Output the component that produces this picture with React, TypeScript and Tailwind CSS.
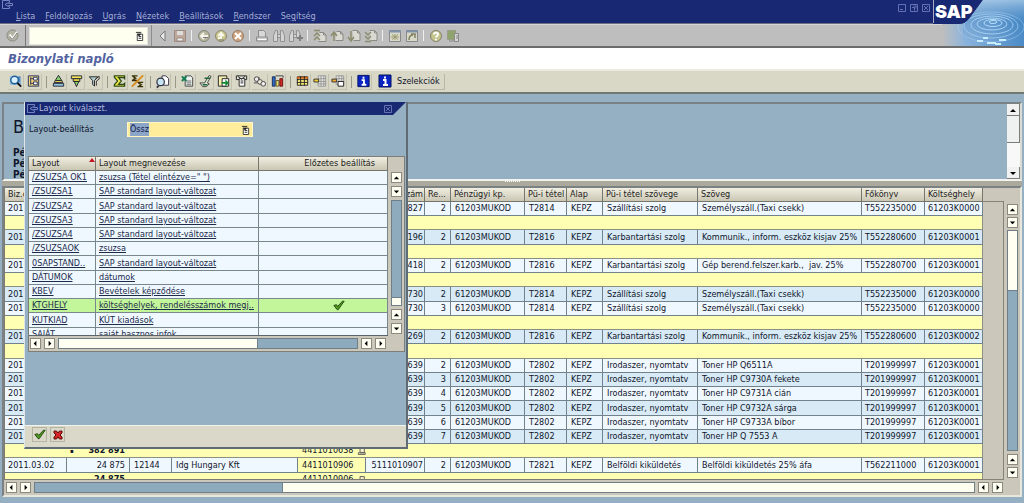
import React, { useEffect, useRef } from 'react';

const menus = [
  ['', 'L', 'ista'],
  ['', 'F', 'eldolgozás'],
  ['', 'U', 'grás'],
  ['', 'N', 'ézetek'],
  ['', 'B', 'eállítások'],
  ['', 'R', 'endszer'],
  ['Se', 'g', 'ítség'],
];

const systemTools = ['back', 'save', '|', 'navBack', 'navUp', 'navCancel', '|', 'print', 'find', 'findNext', '|', 'pageFirst', 'pagePrev', 'pageNext', 'pageLast', '|', 'session', 'shortcut', '|', 'help', 'monitor'];

const appTools = ['details', 'choose', '|', 'sortAsc', 'sortDesc', 'filter', '|', 'sum', 'subtotal', '|', 'preview', '|', 'excel', 'word', 'export', 'mail', 'abc', 'graphic', '|', 'layout', 'layoutChange', 'layoutSave', '|', 'info'];

const columns = [
  { label: 'Biz.d', width: 'w-[62px]' },
  { label: '', width: 'w-[63px]' },
  { label: '', width: 'w-[42px]' },
  { label: '', width: 'w-[126px]' },
  { label: '', width: 'w-[68px]' },
  { label: 'zám', width: 'w-[59px]' },
  { label: 'Re...', width: 'w-[26px]' },
  { label: 'Pénzügyi kp.', width: 'w-[74px]' },
  { label: 'Pü-i tétel', width: 'w-[42px]' },
  { label: 'Alap', width: 'w-[36px]' },
  { label: 'Pü-i tétel szövege', width: 'w-[95px]' },
  { label: 'Szöveg', width: '' },
  { label: 'Főkönyv', width: 'w-[63px]' },
  { label: 'Költséghely', width: 'w-[58px]' },
];

type Row = { sum?: string, mark?: string, doc?: string, cells?: string[], blue?: boolean };

const rows: Row[] = [
  { cells: ['201', '', '', '', '', '827', '2', '61203MUKOD', 'T2814', 'KEPZ', 'Szállítási szolg', 'Személyszáll.(Taxi csekk)', 'T552235000', '61203K0000'] },
  {},
  { blue: true, cells: ['201', '', '', '', '', '196', '2', '61203MUKOD', 'T2816', 'KEPZ', 'Karbantartási szolg', 'Kommunik., inform. eszköz kisjav 25%', 'T552280600', '61203K0001'] },
  {},
  { cells: ['201', '', '', '', '', '418', '2', '61203MUKOD', 'T2816', 'KEPZ', 'Karbantartási szolg', 'Gép berend.felszer.karb.,  jav. 25%', 'T552280700', '61203K0001'] },
  {},
  { blue: true, cells: ['201', '', '', '', '', '730', '2', '61203MUKOD', 'T2814', 'KEPZ', 'Szállítási szolg', 'Személyszáll.(Taxi csekk)', 'T552235000', '61203K0000'] },
  { cells: ['201', '', '', '', '', '730', '3', '61203MUKOD', 'T2814', 'KEPZ', 'Szállítási szolg', 'Személyszáll.(Taxi csekk)', 'T552235000', '61203K0000'] },
  {},
  { blue: true, cells: ['201', '', '', '', '', '269', '2', '61203MUKOD', 'T2816', 'KEPZ', 'Karbantartási szolg', 'Kommunik., inform. eszköz kisjav 25%', 'T552280600', '61203K0002'] },
  {},
  { cells: ['201', '', '', '', '', '639', '2', '61203MUKOD', 'T2802', 'KEPZ', 'Irodaszer, nyomtatv', 'Toner HP Q6511A', 'T201999997', '61203K0001'] },
  { blue: true, cells: ['201', '', '', '', '', '639', '3', '61203MUKOD', 'T2802', 'KEPZ', 'Irodaszer, nyomtatv', 'Toner HP C9730A fekete', 'T201999997', '61203K0001'] },
  { cells: ['201', '', '', '', '', '639', '4', '61203MUKOD', 'T2802', 'KEPZ', 'Irodaszer, nyomtatv', 'Toner HP C9731A cián', 'T201999997', '61203K0001'] },
  { blue: true, cells: ['201', '', '', '', '', '639', '5', '61203MUKOD', 'T2802', 'KEPZ', 'Irodaszer, nyomtatv', 'Toner HP C9732A sárga', 'T201999997', '61203K0001'] },
  { cells: ['201', '', '', '', '', '639', '6', '61203MUKOD', 'T2802', 'KEPZ', 'Irodaszer, nyomtatv', 'Toner HP C9733A bíbor', 'T201999997', '61203K0001'] },
  { blue: true, cells: ['201', '', '', '', '', '639', '7', '61203MUKOD', 'T2802', 'KEPZ', 'Irodaszer, nyomtatv', 'Toner HP Q 7553 A', 'T201999997', '61203K0001'] },
  { mark: '▪', sum: '382 891', doc: '4411010638' },
  { cells: ['2011.03.02', '24 875', '12144', 'Idg Hungary Kft', '4411010906', '5111010907', '2', '61203MUKOD', 'T2821', 'KEPZ', 'Belföldi kiküldetés', 'Belföldi kiküldetés 25% áfa', 'T562211000', '61203K0001'] },
  { sum: '24 875', doc: '4411010906' },
];

const layouts = [
  ['/ZSUZSA OK1', 'zsuzsa (Tétel elintézve=" ")'],
  ['/ZSUZSA1', 'SAP standard layout-változat'],
  ['/ZSUZSA2', 'SAP standard layout-változat'],
  ['/ZSUZSA3', 'SAP standard layout-változat'],
  ['/ZSUZSA4', 'SAP standard layout-változat'],
  ['/ZSUZSAOK', 'zsuzsa'],
  ['0SAPSTAND..', 'SAP standard layout-változat'],
  ['DÁTUMOK', 'dátumok'],
  ['KBEV', 'Bevételek képződése'],
  ['KTGHELY', 'költséghelyek, rendelésszámok megj..'],
  ['KUTKIAD', 'KÚT kiadások'],
  ['SAJÁT', 'saját hasznos infok'],
];

// grey icons of the system toolbar
const systemIcons: Record<string, React.ReactNode> = {
  back: <path d="M10 3v10L5 8z" fill="#e8e8e8" stroke="#777" />,
  save: <><path d="M2.500 2.500h11v11h-11z" fill="#c0a99c" stroke="#9a8a80" /><path d="M5 3h6v4H5z" fill="#ddd" /><path d="M5 10h6v3H5z" fill="#eee" stroke="#9a8a80" /></>,
  navBack: <><circle cx="8" cy="8" r="5.500" fill="#b5b69c" stroke="#85857a" /><path d="M12 8H5M8 5L5 8l3 3" fill="none" stroke="#f4f4ea" strokeWidth="2" /><path d="M12 9.500H7" stroke="#777" /></>,
  navUp: <><circle cx="8" cy="8" r="5.500" fill="#c9c48c" stroke="#8e8870" /><path d="M5 8l3-3 3 3M8 5v5H5" fill="none" stroke="#f8f8ea" strokeWidth="2" /><path d="M6 12h5" stroke="#777" /></>,
  navCancel: <><circle cx="8" cy="8" r="5.500" fill="#cda27e" stroke="#957c66" /><path d="M5 5l6 6M11 5l-6 6" stroke="#fff" strokeWidth="2" /></>,
  print: <><path d="M4.500 9V2.500h5l2 2V9" fill="#d8d8d8" stroke="#8c8c8c" /><path d="M2.500 9h11v4h-11z" fill="#ccc" stroke="#8c8c8c" /><path d="M4 11.500h8" stroke="#fff" /></>,
  find: <path d="M2.500 13.500v-6l2-5h2v11zM9.500 13.500v-11h2l2 5v6zM6.500 6.500h3v3h-3z" fill="#d4d4d4" stroke="#909090" />,
  findNext: <><path d="M1.500 13.500v-6l2-5h2v11zM8.500 10V2.500h2l2 5M5.500 6.500h3v3h-3z" fill="#d4d4d4" stroke="#909090" /><path d="M12 7v6M9 10h6" stroke="#808080" strokeWidth="2" /></>,
  pageFirst: <><path d="M7.500 4.500h4l2.500 2.500v6.500H6.500" fill="#dadad2" stroke="#8a8a84" /><path d="M11.500 4.500V7H14" fill="none" stroke="#8a8a84" /><path d="M2 2.500h6M2 8l3-3 3 3M2 12l3-3 3 3" fill="none" stroke="#8c8d6e" strokeWidth="1.500" /></>,
  pagePrev: <><path d="M7.500 3.500h4l2.500 2.500v6.500H6.500" fill="#dadad2" stroke="#8a8a84" /><path d="M11.500 3.500V6H14" fill="none" stroke="#8a8a84" /><path d="M2 8l3-4 3 4M5 5v8" fill="none" stroke="#8c8d6e" strokeWidth="1.500" /></>,
  pageNext: <><path d="M6.500 2.500h5L14 5v7.500H7.500" fill="#dadad2" stroke="#8a8a84" /><path d="M11.500 2.500V5H14" fill="none" stroke="#8a8a84" /><path d="M2 9l3 4 3-4M5 3v9" fill="none" stroke="#8c8d6e" strokeWidth="1.500" /></>,
  pageLast: <><path d="M6.500 2.500h5L14 5v7.500H7.500" fill="#dadad2" stroke="#8a8a84" /><path d="M11.500 2.500V5H14" fill="none" stroke="#8a8a84" /><path d="M2 4l3 3 3-3M2 8l3 3 3-3M2 13.500h6" fill="none" stroke="#8c8d6e" strokeWidth="1.500" /></>,
  session: <><path d="M2.500 2.500h11v11h-11z" fill="#d9d9c9" stroke="#888" /><path d="M2 3.500h12" stroke="#7c93ab" strokeWidth="2" /><path d="M5 6.500l6 5M11 6.500l-6 5M8 6v6M4 9h8" stroke="#9a9b70" /></>,
  shortcut: <><path d="M2.500 2.500h11v11h-11z" fill="#d9d9c9" stroke="#888" /><path d="M2 3.500h12" stroke="#7c93ab" strokeWidth="2" /><path d="M5 12c0-3 1-5 4-5M7 6h4v4" fill="none" stroke="#808060" strokeWidth="1.500" /></>,
  help: <><circle cx="8" cy="8" r="5.500" fill="#c4c48c" stroke="#808068" /><path d="M6 6.500c0-3 4.500-2 4 0-.5 1.500-2 1.500-2 3M8 11v1.500" fill="none" stroke="#fff" strokeWidth="2" /></>,
  monitor: <><path d="M2.500 2.500h8v9h-8z" fill="#8fa36c" stroke="#9c9c8a" /><path d="M9.500 5.500h4v8h-4z" fill="#d5d5d5" stroke="#888" /><path d="M4 13h5M11 8h2M11 10h2" stroke="#888" /></>,
};

// coloured icons of the list toolbar
const appIcons: Record<string, React.ReactNode> = {
  details: <><path d="M2 3h12v9H2z" fill="#8fb8dc" /><path d="M9 4h4M10 6h3M10 8h3" stroke="#2a5a90" /><circle cx="7" cy="7" r="4" fill="#d8f0ff" stroke="#1c5f96" strokeWidth="1.500" /><path d="M10 10l4 4" stroke="#111" strokeWidth="2" /></>,
  choose: <><path d="M2.500 2.500h11v11h-11z" fill="#f5cf78" stroke="#26365e" /><path d="M5 4v8M5 5.500h3M5 10.500h3" stroke="#26365e" /><path d="M8 4h4v3H8zM8 9h4v3H8z" fill="#fff" stroke="#26365e" /></>,
  sortAsc: <><path d="M8 2l3.500 5.500h-7z" fill="#8bd06a" stroke="#223" /><path d="M4.500 7.500h7l1 2h-9z" fill="#f4e85c" stroke="#223" /><path d="M2.500 10.500h11v3h-11z" fill="#90c6e2" stroke="#223" /></>,
  sortDesc: <><path d="M2.500 2.500h11v3h-11z" fill="#f4e85c" stroke="#223" /><path d="M4.500 5.500h7v3h-7z" fill="#e4d640" stroke="#223" /><path d="M5.500 8.500h5L8 14z" fill="#8bd06a" stroke="#223" /></>,
  filter: <><path d="M2.500 3.500h9l-3.500 4v6l-2-2v-4z" fill="#b5cfd0" stroke="#222" /><path d="M9 6l4-3v3l-3 2v5" fill="none" stroke="#333" /></>,
  sum: <path d="M2.500 2.500h11v3l-1-1H7l3 3.500-3 3.500h5.500l1-1v3h-11V12L6 8 2.500 4z" fill="#f5ef43" stroke="#2b4a18" strokeWidth="1.300" />,
  subtotal: <><path d="M2 2.500h6M2 7.500h6M3 3l3 2-3 2M8 9.500h6M8 14h6M9 10l3 2-3 2" fill="none" stroke="#383000" strokeWidth="1.500" /><path d="M14 2L2 14" stroke="#d88d1c" strokeWidth="2" /></>,
  preview: <><path d="M7.500 2.500h4l3 3v7h-7z" fill="#fff" stroke="#334" /><circle cx="6" cy="9" r="4" fill="#c6e3f2" stroke="#334" strokeWidth="1.300" /><path d="M4 13l-2 2" stroke="#334" strokeWidth="2" /></>,
  excel: <><path d="M5.500 2.500h6l2 2v9h-8z" fill="#e9f0ee" stroke="#444" /><path d="M2 3l5 5M7 3L2 8" stroke="#167c55" strokeWidth="2" /><path d="M7 8h5M7 10h5M7 12h5" stroke="#666" /></>,
  word: <><path d="M2 10h5l5-8 2 1-4 7 2 1-3 3H5z" fill="#d7e5d1" stroke="#444" /><path d="M7 5h6M5 12h5" stroke="#20663d" strokeWidth="1.500" /></>,
  export: <><path d="M2.500 2.500h9v11h-9z" fill="#f4efae" stroke="#222" /><path d="M6.500 5.500h7v8h-7z" fill="#fff" stroke="#222" /><path d="M6 9h4V6.500l4 3.500-4 3.500V11H6z" fill="#168a36" /></>,
  mail: <><path d="M2.500 2.500h11v4h-11z" fill="#e5e5dd" stroke="#222" /><path d="M5.500 5.500h6v8h-6z" fill="#fff" stroke="#222" /><path d="M7 8h3M7 10h3M4 3l4 3 4-3" fill="none" stroke="#222" /></>,
  abc: <><circle cx="5" cy="6" r="2.500" fill="#eee" stroke="#444" /><path d="M7.500 4v7M2 10h4" stroke="#444" /><circle cx="8.500" cy="9" r="2.500" fill="#f6f3df" stroke="#444" /><circle cx="12" cy="11" r="2.500" fill="#eee" stroke="#444" /></>,
  graphic: <><path d="M2.500 3.500h3v10h-3z" fill="#2f6cc5" stroke="#1c2b55" /><path d="M6.500 7.500h3v6h-3z" fill="#f0dc58" stroke="#554" /><path d="M10.500 5.500h3v8h-3z" fill="#d32a24" stroke="#611" /><path d="M6 2.500h8v2" fill="none" stroke="#444" /></>,
  layout: <><path d="M2.500 3.500h11v9h-11z" fill="#fff27a" stroke="#222" /><path d="M2 4.500h12" stroke="#c85d1c" strokeWidth="2" /><path d="M6 3v10M10 3v10M2 6.500h12M2 9.500h12" stroke="#222" /></>,
  layoutChange: <><path d="M5.500 2.500h8v11h-8zM8.500 2v12M11.500 2v12M5 5.500h9M5 8.500h9M5 11h9" fill="#e6e6e0" stroke="#999" /><path d="M1 6h5v3H1z" fill="#f5cf2c" stroke="#333" /></>,
  layoutSave: <><path d="M5.500 2.500h8v9h-8zM8.500 2v10M11.500 2v10M5 5.500h9M5 8.500h9" fill="#e6e6e0" stroke="#999" /><path d="M1 6h5v3H1z" fill="#f5a52c" stroke="#333" /><path d="M7.500 8.500h6v5h-6z" fill="#fff" stroke="#222" /></>,
  info: <><path d="M2 2h12v12H2z" fill="#0a24c4" stroke="#001060" /><path d="M6 7h2.500v5M6 12h5M7 4.500h2" fill="none" stroke="#fff" strokeWidth="2" /></>,
};

function Icon({ children }: { children: React.ReactNode }) {
  return <svg viewBox="0 0 16 16" className="w-4 h-4 block" aria-hidden="true">{children}</svg>;
}

function MatchIcon() {
  return (
    <svg viewBox="0 0 10 11" className="w-[9px] h-[10px] block" aria-hidden="true">
      <path d="M2.500 3.500h6v7h-6z" fill="#fff" stroke="#333" />
      <path d="M1 1.500h6M4 6h3M4 8h3" stroke="#222" />
      <path d="M2 3h5L4.500 6z" fill="#222" />
    </svg>
  );
}

function Check() {
  return (
    <svg viewBox="0 0 14 12" className="w-3 h-[11px] block" aria-hidden="true">
      <path d="M1 6l3-1 1.500 2L11 1h2L6 11H5z" fill="#4f9a1e" stroke="#1c3d0a" />
    </svg>
  );
}

function Exit({ className }: { className: string }) {
  return (
    <svg viewBox="0 0 12 9" className={className} aria-hidden="true">
      <path d="M8.500 2.500v-2h-7v8h7v-2M11.500 3.500h-4v-1L4 4.500 7.500 6.500v-1h4z" fill="none" stroke="#7585c2" />
    </svg>
  );
}

const arrows: Record<string, string> = {
  up: 'M2 7h6L5 4z',
  down: 'M2 4h6L5 7z',
  left: 'M3 5l3-3v6z',
  right: 'M7 5L4 2v6z',
};

function Arrow({ dir }: { dir: string }) {
  return (
    <button type="button" aria-label={dir} className="w-[11px] h-[11px] shrink-0 bg-[#fffff2] border border-[#8c8a80]">
      <svg viewBox="0 0 10 10" className="w-full h-full block"><path d={arrows[dir]} /></svg>
    </button>
  );
}

function WindowButton({ d, label }: { d: string, label: string }) {
  return (
    <button type="button" aria-label={label} className="w-2 h-2">
      <svg viewBox="0 0 8 8" className="w-full h-full block">
        <path d={'M.5.5h7v7h-7z' + d} fill="none" stroke="#6372b4" />
      </svg>
    </button>
  );
}

function SapLogo() {
  return (
    <div className="absolute top-0 right-0 w-[91px] h-[46px] overflow-hidden">
      <svg viewBox="0 0 91 46" className="w-full h-full block" aria-hidden="true">
        <defs>
          <linearGradient id="water" x1="0" y1="0" x2="1" y2="0">
            <stop offset="0.100" stopColor="#bebebe" />
            <stop offset="0.350" stopColor="#8db4dc" />
            <stop offset="1" stopColor="#4a8ac6" />
          </linearGradient>
          <linearGradient id="shine" x1="0" y1="0" x2="0" y2="1">
            <stop offset="0" stopColor="#b5d3ec" stopOpacity="0.700" />
            <stop offset="0.500" stopColor="#3c7fbf" stopOpacity="0.300" />
            <stop offset="1" stopColor="#5e9ad2" stopOpacity="0" />
          </linearGradient>
          <clipPath id="pool"><path d="M50 0h41v46H9V24h18q5 0 9-5z" /></clipPath>
        </defs>
        <path d="M0 0h52L36 19q-4 5-9 5H0z" fill="#182872" />
        <path d="M.5 0v23" stroke="#a7acc0" />
        <g clipPath="url(#pool)">
          <path d="M0 0h91v46H0z" fill="url(#water)" />
          <path d="M30 0h61v46H30z" fill="url(#shine)" />
          <g fill="none" stroke="#b4dcf8">
            <ellipse cx="60" cy="22" rx="4" ry="1.500" />
            <ellipse cx="60" cy="23" rx="9" ry="3.500" />
            <ellipse cx="59" cy="24" rx="15" ry="6" strokeOpacity="0.850" />
            <ellipse cx="59" cy="25" rx="21" ry="9" strokeOpacity="0.750" />
            <ellipse cx="58" cy="26" rx="27" ry="12" strokeOpacity="0.600" />
            <ellipse cx="58" cy="27" rx="33" ry="15" strokeOpacity="0.400" />
          </g>
          <path d="M44 41h6M54 43h9M66 40h7M50 38h5M62 44h6" stroke="#c9ecff" strokeWidth="2" />
        </g>
      </svg>
      <span className="absolute left-[2px] top-0 font-['Inter','Liberation_Sans',sans-serif] font-black text-[18px] leading-[23px] text-white">SAP</span>
    </div>
  );
}

function DocIcon() {
  return (
    <svg viewBox="0 0 11 11" className="w-[10px] h-[10px] block" aria-hidden="true">
      <path d="M3.500 1.500h5v6h-5zM1.500 7.500h8v2h-8z" fill="#f3eecb" stroke="#55544a" />
    </svg>
  );
}

function cellClass(i: number) {
  if (i === 5) return 'text-right pr-[1px]';
  if (i === 1 || i === 6) return 'text-right pr-1';
  if (i === 0 || i > 11) return 'pl-[3px]';
  return 'pl-1';
}

function rowHeight(i: number) {
  return i % 4 === 2 ? 'h-[15px]' : 'h-[14px]';
}

function ListRow({ row, index }: { row: Row, index: number }) {
  if (!row.cells) {
    return (
      <tr className={'bg-[#ffffb3] ' + rowHeight(index)}>
        <td className="border-b border-[#8b9085]" />
        <td className="border-b border-[#8b9085] pl-[3px] pr-[5px] font-bold">
          <span className="flex justify-between">
            <span className="text-[6px]">{row.mark}</span>
            <span>{row.sum}</span>
          </span>
        </td>
        <td colSpan={2} className="border-b border-[#8b9085]" />
        <td className="border-b border-[#8b9085] pl-1">
          {row.doc && <span className="flex items-center gap-[3px]">{row.doc}<DocIcon /></span>}
        </td>
        <td colSpan={9} className="border-b border-r border-[#8b9085]" />
      </tr>
    );
  }
  return (
    <tr className={(row.blue ? 'bg-[#d7eaf5] ' : 'bg-[#f0f8ff] ') + rowHeight(index)}>
      {row.cells.map((cell, i) => (
        <td key={i} className={'border-b border-r border-[#71828c] overflow-hidden whitespace-pre ' + cellClass(i) + (i === 4 ? ' bg-[#ffffb3]' : '')}>{cell}</td>
      ))}
    </tr>
  );
}

function LayoutDialog() {
  const field = useRef<HTMLInputElement>(null);

  useEffect(() => {
    field.current?.focus();
    field.current?.select();
  }, []);

  return (
    <div role="dialog" aria-label="Layout kiválaszt." className="absolute left-6 top-[102px] w-[384px] h-[347px] flex flex-col bg-[#94b0c2] border-l border-l-[#dfe6ea] border-r-2 border-b-2 border-[#5f6c76]">
      <div className="h-[13px] shrink-0 flex items-center bg-[#182872] text-[#b3bbdd] text-[9px] leading-[13px] [clip-path:polygon(0_0,100%_0,calc(100%-13px)_100%,0_100%)]">
        <Exit className="w-3 h-[9px] ml-[1px]" />
        <span className="ml-[1px] flex-1">Layout kiválaszt.</span>
        <span className="flex mr-[14px]"><WindowButton label="Bezárás" d="M2 2l4 4M6 2L2 6" /></span>
      </div>
      <div className="flex items-center h-[15px] mt-[7px] shrink-0">
        <label htmlFor="layout" className="w-[102px] pl-1">Layout-beállítás</label>
        <div className="w-[126px] h-[15px] flex items-center bg-[#ffed9c] border border-[#fff6c8] pr-[2px]">
          <input ref={field} id="layout" defaultValue="Össz" className="flex-1 min-w-0 pl-[2px] bg-transparent outline-none leading-[13px] selection:bg-[#8aa5c8] selection:text-[#18204a]" />
          <button type="button" aria-label="Lista"><MatchIcon /></button>
        </div>
      </div>
      <div className="mt-[19px] ml-[3px] mr-[1px] h-[196px] shrink-0 flex flex-col bg-[#cbc8bb] border border-[#7d7e78]">
        <div className="flex flex-1 min-h-0">
          <div className="flex-1 min-w-0 overflow-hidden border-b border-[#5c6468]">
            <table className="w-full table-fixed border-separate border-spacing-0 text-[#1c2a4c]">
              <thead>
                <tr className="h-[14px] text-left text-[#222] bg-linear-to-b from-[#f1efe2] to-[#c7c3b0]">
                  <th className="w-[67px] font-normal pl-[3px] border-r border-b border-[#77766c]">
                    <span className="flex justify-between">Layout
                      <svg viewBox="0 0 6 4" className="w-[6px] h-1 mt-[1px]" aria-hidden="true"><path d="M0 4l3-4 3 4z" fill="#c31522" /></svg>
                    </span>
                  </th>
                  <th className="w-[163px] font-normal pl-[3px] border-r border-b border-[#77766c]">Layout megnevezése</th>
                  <th className="font-normal text-right pr-3 border-r border-b border-[#77766c]">Előzetes beállítás</th>
                </tr>
              </thead>
              <tbody>
                {layouts.map(([name, text], i) => (
                  <tr key={name} className={(name === 'KTGHELY' ? 'bg-[#c3f59a] ' : 'bg-[#eff8ff] ') + rowHeight(i)}>
                    <td className="pl-[3px] border-r border-b border-[#77868f] whitespace-nowrap overflow-hidden"><a href="#" className="underline">{name}</a></td>
                    <td className="pl-[3px] border-r border-b border-[#77868f] whitespace-nowrap overflow-hidden"><a href="#" className="underline">{text}</a></td>
                    <td className="pl-4 border-r border-b border-[#77868f]">{name === 'KTGHELY' && <span className="flex justify-center pl-4"><Check /></span>}</td>
                  </tr>
                ))}
              </tbody>
            </table>
          </div>
          <div className="w-4 shrink-0 pt-[15px] pb-[2px] flex flex-col items-center gap-[3px]">
            <Arrow dir="up" />
            <Arrow dir="down" />
            <div className="w-[11px] flex-1 flex flex-col border border-[#6f7f88] bg-[#8eabbe]">
              <div className="mt-auto h-2 bg-[#fffff2] border-t border-[#6f7f88]" />
            </div>
            <Arrow dir="up" />
            <Arrow dir="down" />
          </div>
        </div>
        <div className="h-[15px] shrink-0 flex items-center gap-[3px] pl-[1px] pr-[18px]">
          <Arrow dir="left" />
          <Arrow dir="right" />
          <div className="flex-1 h-[11px] flex border border-[#6f7f88] bg-[#8eabbe]">
            <div className="w-2/3 bg-[#fffff2] border-r border-[#6f7f88]" />
          </div>
          <Arrow dir="left" />
          <Arrow dir="right" />
        </div>
      </div>
      <div className="mt-auto h-[22px] shrink-0 flex items-center gap-[3px] pl-[7px] pb-1 bg-[#dad8c9] border-t border-[#f5f4ea]">
        <button type="button" aria-label="Rendben" className="w-[15px] h-[15px] flex items-center justify-center border border-[#b5b3a2]"><Check /></button>
        <button type="button" aria-label="Mégse" className="w-[15px] h-[15px] flex items-center justify-center border border-[#b5b3a2]">
          <svg viewBox="0 0 10 10" className="w-[10px] h-[10px]" aria-hidden="true">
            <path d="M1 1h2.500L5 3l1.500-2H9v2L7 5l2 2v2H6.500L5 7 3.500 9H1V7l2-2-2-2z" fill="#d42525" stroke="#5e0d0d" />
          </svg>
        </button>
      </div>
    </div>
  );
}

export default function App() {
  return (
    <div className="relative h-screen min-h-[503px] flex flex-col overflow-hidden bg-[#94b0c2] font-['DejaVu_Sans_Condensed','DejaVu_Sans',sans-serif] text-[9px] leading-[13px] text-[#10162c]">
      <header className="h-6 shrink-0 flex justify-between bg-[#182872] border-b border-[#6d7083] pr-[91px]">
        <div>
          <Exit className="w-3 h-[9px] ml-[1px] block" />
          <nav className="flex gap-[10px] pl-4 pt-[1px] text-[#a3add6]">
            {menus.map(([before, key, after]) => (
              <button key={key} type="button">{before}<span className="underline">{key}</span>{after}</button>
            ))}
          </nav>
        </div>
        <div className="flex gap-1 pt-1 pr-[3px]">
          <WindowButton label="Kis méret" d="M2 5.500h3" />
          <WindowButton label="Visszaállítás" d="M3.500 2h2.500v2.500M2 3.500h2.500v3" />
          <WindowButton label="Bezárás" d="M2 2l4 4M6 2L2 6" />
        </div>
      </header>

      <div className="h-6 shrink-0 flex items-center bg-[#bebebe] border-t border-[#d6d6d6] border-b-2 border-b-[#6c6c6c]">
        <button type="button" aria-label="Enter" className="w-[26px] h-full flex items-center justify-center border-r border-[#777]">
          <svg viewBox="0 0 14 14" className="w-[13px] h-[13px]" aria-hidden="true">
            <circle cx="7" cy="7" r="6" fill="#b4b4a4" stroke="#87877d" />
            <path d="M4 6l3 4 5-7" fill="none" stroke="#fff" strokeWidth="2" />
            <path d="M4 8l3 3 5-7" fill="none" stroke="#777" />
          </svg>
        </button>
        <div className="ml-[3px] w-[119px] h-[18px] flex items-center bg-[#fffff0] border border-[#e4e4dc] pr-[3px]">
          <input aria-label="Parancs" className="flex-1 min-w-0 bg-transparent outline-none" />
          <button type="button" aria-label="Előzmények"><MatchIcon /></button>
        </div>
        <span className="w-1 h-full border-r border-[#8c8c8c]" />
        <div className="flex items-center ml-[2px]">
          {systemTools.map((name, i) => name === '|'
            ? <span key={i} className="w-[1px] h-[11px] mx-[3px] bg-[#efefef]" />
            : <button key={i} type="button" aria-label={name} className="w-[17px] flex justify-center"><Icon>{systemIcons[name]}</Icon></button>
          )}
        </div>
      </div>

      <h1 className="h-[21px] shrink-0 bg-white pl-2 text-[13px] leading-[21px] font-bold italic text-[#5363a0]">Bizonylati napló</h1>

      <div className="h-[25px] shrink-0 flex items-center pl-[7px] bg-[#d9d7c6] border-t-2 border-t-[#ebeadf] border-b-2 border-b-[#70786f]">
        {appTools.map((name, i) => name === '|'
          ? <span key={i} className="w-[1px] h-3 mx-[3px] bg-[#98978a]" />
          : (
            <button key={i} type="button" aria-label={name} className="w-4 h-4 mx-[1px] flex items-center justify-center border-r border-b border-[#c2c0ae]">
              <Icon>{appIcons[name]}</Icon>
            </button>
          )
        )}
        <button type="button" className="ml-1 h-4 flex items-center gap-1 pr-1 border-r border-b border-[#b9b7a5]"><Icon>{appIcons.info}</Icon>Szelekciók</button>
      </div>

      <main className="flex-1 min-h-0 flex flex-col pt-2 px-[2px] pb-[6px]">
        <section className="h-[79px] shrink-0 flex justify-between border-2 border-[#7c8284] border-b-[#f2f2ee] border-r-[#dcdcd4]">
          <div className="pl-[9px] pt-3">
            <div className="text-[18px] leading-[22px]">B</div>
            <div className="mt-[9px] text-[10px] leading-[11px] font-bold">
              <div>Pé</div>
              <div>Pé</div>
              <div>Pé</div>
            </div>
          </div>
          <div className="w-[13px] flex flex-col bg-[#f8f8f8]">
            <button type="button" aria-label="Fel" className="h-3 border-r border-b border-[#7b7b7b] bg-[#f1f1f1]"><svg viewBox="0 0 12 10" className="w-full h-[10px]"><path d="M3 7h6L6 4z" /></svg></button>
            <div className="h-[27px] border-r border-b border-[#7b7b7b] bg-[#eff1f1]" />
            <button type="button" aria-label="Le" className="mt-auto h-3 border-r border-b border-[#7b7b7b] bg-[#f1f1f1]"><svg viewBox="0 0 12 10" className="w-full h-[10px]"><path d="M3 4h6L6 7z" /></svg></button>
          </div>
        </section>

        <div className="h-[5px] shrink-0 flex items-start justify-center bg-[#aba89c]">
          <span className="w-[15px] border-t border-dotted border-white" />
        </div>

        <section className="flex-1 min-h-0 flex flex-col bg-[#cbc8bb] border-2 border-[#7c8284] border-b-[#e8e7dd] border-r-[#e8e7dd]">
          <div className="flex-1 min-h-0 flex">
            <div className="flex-1 min-w-0 overflow-hidden border-b border-l border-[#7c7c74]">
              <table className="w-full table-fixed border-separate border-spacing-0">
                <thead>
                  <tr className="h-[14px] text-left text-[#222] bg-linear-to-b from-[#f1efe2] to-[#c7c3b0]">
                    {columns.map((col, i) => (
                      <th key={i} className={'font-normal whitespace-nowrap overflow-hidden border-r border-b border-[#77766c] ' + (i === 5 ? 'text-right pr-[1px] ' : 'pl-[3px] ') + col.width}>{col.label}</th>
                    ))}
                  </tr>
                </thead>
                <tbody>
                  {rows.map((row, i) => <ListRow key={i} row={row} index={i} />)}
                </tbody>
              </table>
            </div>
            <div className="w-[21px] mt-[13px] border-t border-r border-b border-[#85847a]" />
            <div className="w-4 pt-4 pb-[2px] flex flex-col items-center gap-[2px]">
              <Arrow dir="up" />
              <Arrow dir="down" />
              <div className="w-[11px] flex-1 mb-[1px] flex flex-col border border-[#6f7f88] bg-[#8eabbe]">
                <div className="h-[60px] bg-[#fffff2] border-b border-[#6f7f88]" />
              </div>
              <Arrow dir="up" />
              <Arrow dir="down" />
            </div>
          </div>
          <div className="h-[15px] shrink-0 flex items-center gap-[3px] pl-[2px] pr-[17px]">
            <Arrow dir="left" />
            <Arrow dir="right" />
            <div className="flex-1 h-[11px] flex border border-[#6f7f88] bg-[#fffff0]">
              <div className="w-[248px] bg-[#8eabbe] border-r border-[#6f7f88]" />
            </div>
            <Arrow dir="left" />
            <Arrow dir="right" />
          </div>
        </section>
      </main>

      <SapLogo />
      <LayoutDialog />
    </div>
  );
}
